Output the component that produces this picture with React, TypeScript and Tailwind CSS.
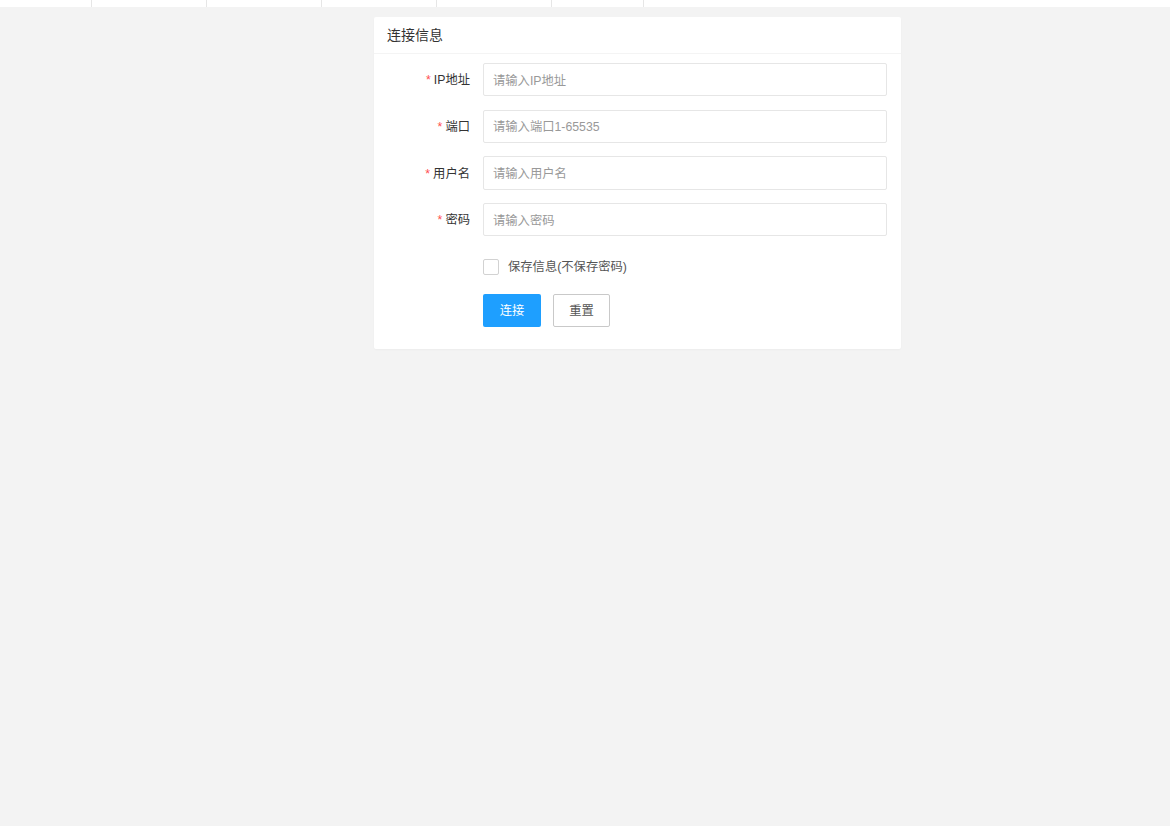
import { useState } from 'react';

const fields = [
    { label: 'IP地址', placeholder: '请输入IP地址', type: 'text' },
    { label: '端口', placeholder: '请输入端口1-65535', type: 'text' },
    { label: '用户名', placeholder: '请输入用户名', type: 'text' },
    { label: '密码', placeholder: '请输入密码', type: 'password' },
];

const tabs = [92, 115, 115, 115, 115, 92];

export default function App() {
    const [save, setSave] = useState(false);

    return (
        <div
            className="min-h-[826px] bg-[#f3f3f3] text-[#333]"
            style={{ fontFamily: '"Liberation Sans", "Noto Sans CJK SC", sans-serif' }}
        >
            {/* cut-off tab strip */}
            <div className="flex h-[7px] bg-white">
                {tabs.map((w, i) => (
                    <div key={i} className="h-full border-r border-[#e6e6e6]" style={{ width: w }} />
                ))}
            </div>

            <div className="flex pt-[10px] pl-[374px]">
                <div className="w-[527px] bg-white rounded-[2px] shadow-[0_1px_2px_rgba(0,0,0,0.03)]">
                    <div className="h-[37px] px-[13px] pt-[1px] flex items-center border-b border-[#f4f4f4] text-[14px] text-[#333]">
                        连接信息
                    </div>

                    <form className="pl-[13px] pr-[14px] pt-[9px] pb-[22px]" onSubmit={(e) => e.preventDefault()}>
                        <div className="flex flex-col gap-[13.33px]">
                            {fields.map((f) => (
                                <div key={f.label} className="flex items-center">
                                    <label className="w-[96px] pr-[13px] pt-[2px] text-right text-[12.3px] text-[#333] whitespace-nowrap">
                                        <span className="text-[#ff4d4f] mr-[3px]">*</span>
                                        {f.label}
                                    </label>
                                    <input
                                        type={f.type}
                                        placeholder={f.placeholder}
                                        className="w-[404px] h-[33.33px] px-[9px] pt-[2px] border border-[#e6e6e6] rounded-[2px] text-[12.3px] text-[#333] placeholder:text-[#999] outline-none"
                                    />
                                </div>
                            ))}
                        </div>

                        <div className="pl-[96px] mt-[20.5px]">
                            <label className="flex items-center cursor-pointer w-fit">
                                <span
                                    onClick={() => setSave(!save)}
                                    className={`w-[16px] h-[16px] border rounded-[2px] ${save ? 'bg-[#1e9fff] border-[#1e9fff]' : 'bg-white border-[#d2d2d2]'}`}
                                />
                                <span className="ml-[9px] pt-[1px] text-[12.3px] text-[#555]">保存信息(不保存密码)</span>
                            </label>

                            <div className="flex gap-[12px] mt-[18px]">
                                <button className="w-[58px] h-[33px] pt-[1px] bg-[#1e9fff] text-white text-[12.3px] rounded-[2px]">
                                    连接
                                </button>
                                <button
                                    type="button"
                                    className="w-[57px] h-[33px] pt-[1px] bg-white border border-[#c9c9c9] text-[#555] text-[12.3px] rounded-[2px]"
                                >
                                    重置
                                </button>
                            </div>
                        </div>
                    </form>
                </div>
            </div>
        </div>
    );
}
